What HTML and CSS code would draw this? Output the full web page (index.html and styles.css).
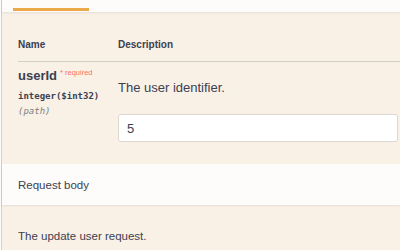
FILE: index.html
```html
<!DOCTYPE html>
<html lang="en">
<head>
    <meta charset="UTF-8">
    <meta name="viewport" content="width=device-width, initial-scale=1.0">
    <title>PUT /users/{userId}</title>
    <link rel="stylesheet" href="styles.css">
</head>
<body>
    <div class="opblock">
        <!-- Tab header with active underline -->
        <div class="tab-header">
            <span class="tab-line"></span>
        </div>

        <!-- Parameters table -->
        <div class="parameters">
            <div class="param-head">
                <div class="col-name">Name</div>
                <div class="col-desc">Description</div>
            </div>
            <div class="param-row">
                <div class="col-name">
                    <div class="param-name">userId<span class="required">*&nbsp;required</span></div>
                    <div class="param-type">integer($int32)</div>
                    <div class="param-in">(path)</div>
                </div>
                <div class="col-desc">
                    <p class="param-text">The user identifier.</p>
                    <input class="param-input" type="text" value="5">
                </div>
            </div>
        </div>

        <div class="section-header">Request body</div>
        <div class="body-desc">The update user request.</div>
    </div>
</body>
</html>
```

FILE: styles.css
```css
/* Page */
body {
    margin: 0;
    padding: 0;
    background: #fdfcfa;
    font-family: "Liberation Sans", Arial, sans-serif;
    color: #3b4151;
    overflow: hidden;
}

/* Operation block (PUT colours) */
.opblock {
    margin-left: 1px;
    border-left: 1px solid #efcc90;
    background: #f9f0e6;
    min-height: 250px;
}

/* Tab header */
.tab-header {
    height: 12px;
    background: #fdfcfa;
    box-shadow: 0 1px 2px rgba(0, 0, 0, 0.08);
    position: relative;
}

.tab-line {
    display: block;
    position: absolute;
    left: 11px;
    top: 8px;
    width: 76px;
    height: 3px;
    background: #eba94a;
}

/* Parameters */
.parameters {
    padding-left: 16px;
}

.param-head {
    display: grid;
    grid-template-columns: 100px 1fr;
    padding: 27px 0 10px;
    border-bottom: 1px solid rgba(59, 65, 81, 0.2);
    font-size: 10px;
    font-weight: bold;
    line-height: 12px;
}

.param-row {
    display: grid;
    grid-template-columns: 100px 1fr;
    padding: 6px 0 22px;
}

.param-name {
    font-size: 13px;
    font-weight: bold;
    line-height: 16px;
}

.required {
    position: relative;
    top: -5px;
    margin-left: 3px;
    font-size: 7.5px;
    font-weight: normal;
    color: rgba(255, 0, 0, 0.6);
}

.param-type {
    margin-top: 4px;
    font-family: "DejaVu Sans Mono", monospace;
    font-size: 9px;
    font-weight: 600;
    line-height: 13px;
}

.param-in {
    margin-top: 2px;
    font-family: "DejaVu Sans Mono", monospace;
    font-size: 9px;
    font-style: italic;
    line-height: 13px;
    color: #808080;
}

.param-text {
    margin: 12px 0 0;
    font-size: 13px;
    line-height: 16px;
}

.param-input {
    display: block;
    box-sizing: border-box;
    width: 280px;
    height: 28px;
    margin-top: 18px;
    padding: 0 8px;
    border: 1px solid #dcd8d2;
    border-radius: 3px;
    background: #fff;
    font-family: "Liberation Sans", Arial, sans-serif;
    font-size: 13px;
    color: #3b4151;
}

/* Request body */
.section-header {
    height: 41px;
    padding-left: 16px;
    display: flex;
    align-items: center;
    background: #fdfcfa;
    box-shadow: 0 1px 2px rgba(0, 0, 0, 0.08);
    font-size: 11.5px;
}

.body-desc {
    padding: 24px 0 0 16px;
    font-size: 11.5px;
    line-height: 14px;
}
```
